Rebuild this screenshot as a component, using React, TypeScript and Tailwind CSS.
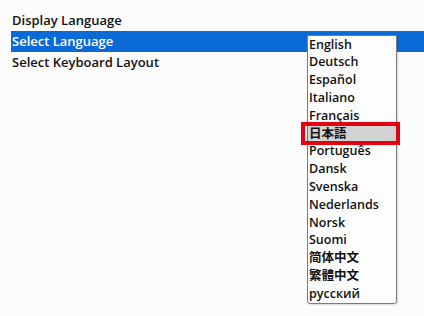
const languages = [
  'English',
  'Deutsch',
  'Español',
  'Italiano',
  'Français',
  '日本語',
  'Português',
  'Dansk',
  'Svenska',
  'Nederlands',
  'Norsk',
  'Suomi',
  '简体中文',
  '繁體中文',
  'русский',
];

const font = { fontFamily: '"Open Sans", "Noto Sans CJK JP", "Noto Sans CJK SC", sans-serif' };

export default function App() {
  return (
    <div className="relative w-[424px] h-[316px] bg-[#fcfcfc] overflow-hidden text-[#111]" style={font}>
      <div className="pt-[10px] flex flex-col text-[13px] font-semibold">
        <div className="h-[21px] pl-[12px] flex items-center">Display Language</div>
        <div className="h-[21px] ml-[11px] pl-[1px] flex items-center bg-[#0a6ad8] text-white">Select Language</div>
        <div className="h-[21px] pl-[12px] flex items-center">Select Keyboard Layout</div>
      </div>

      {/* dropdown list */}
      <div className="absolute left-[307px] top-[35px] w-[90px] bg-[#fdfdfd] border border-[#7a7a7a] rounded-b-[3px] shadow-[1px_1px_2px_rgba(0,0,0,0.15)]">
        {languages.map((lang) => (
          <div
            key={lang}
            className={
              'relative h-[17.8px] pl-[1px] flex items-center text-[12.5px] font-semibold ' +
              (lang === '日本語' ? 'bg-[#d2d2d2]' : '')
            }
          >
            {lang}
            {lang === '日本語' && (
              <div className="absolute left-[-7px] right-[-4px] top-[-3px] bottom-[-2px] border-[4px] border-[#e3000f]" />
            )}
          </div>
        ))}
      </div>
    </div>
  );
}
